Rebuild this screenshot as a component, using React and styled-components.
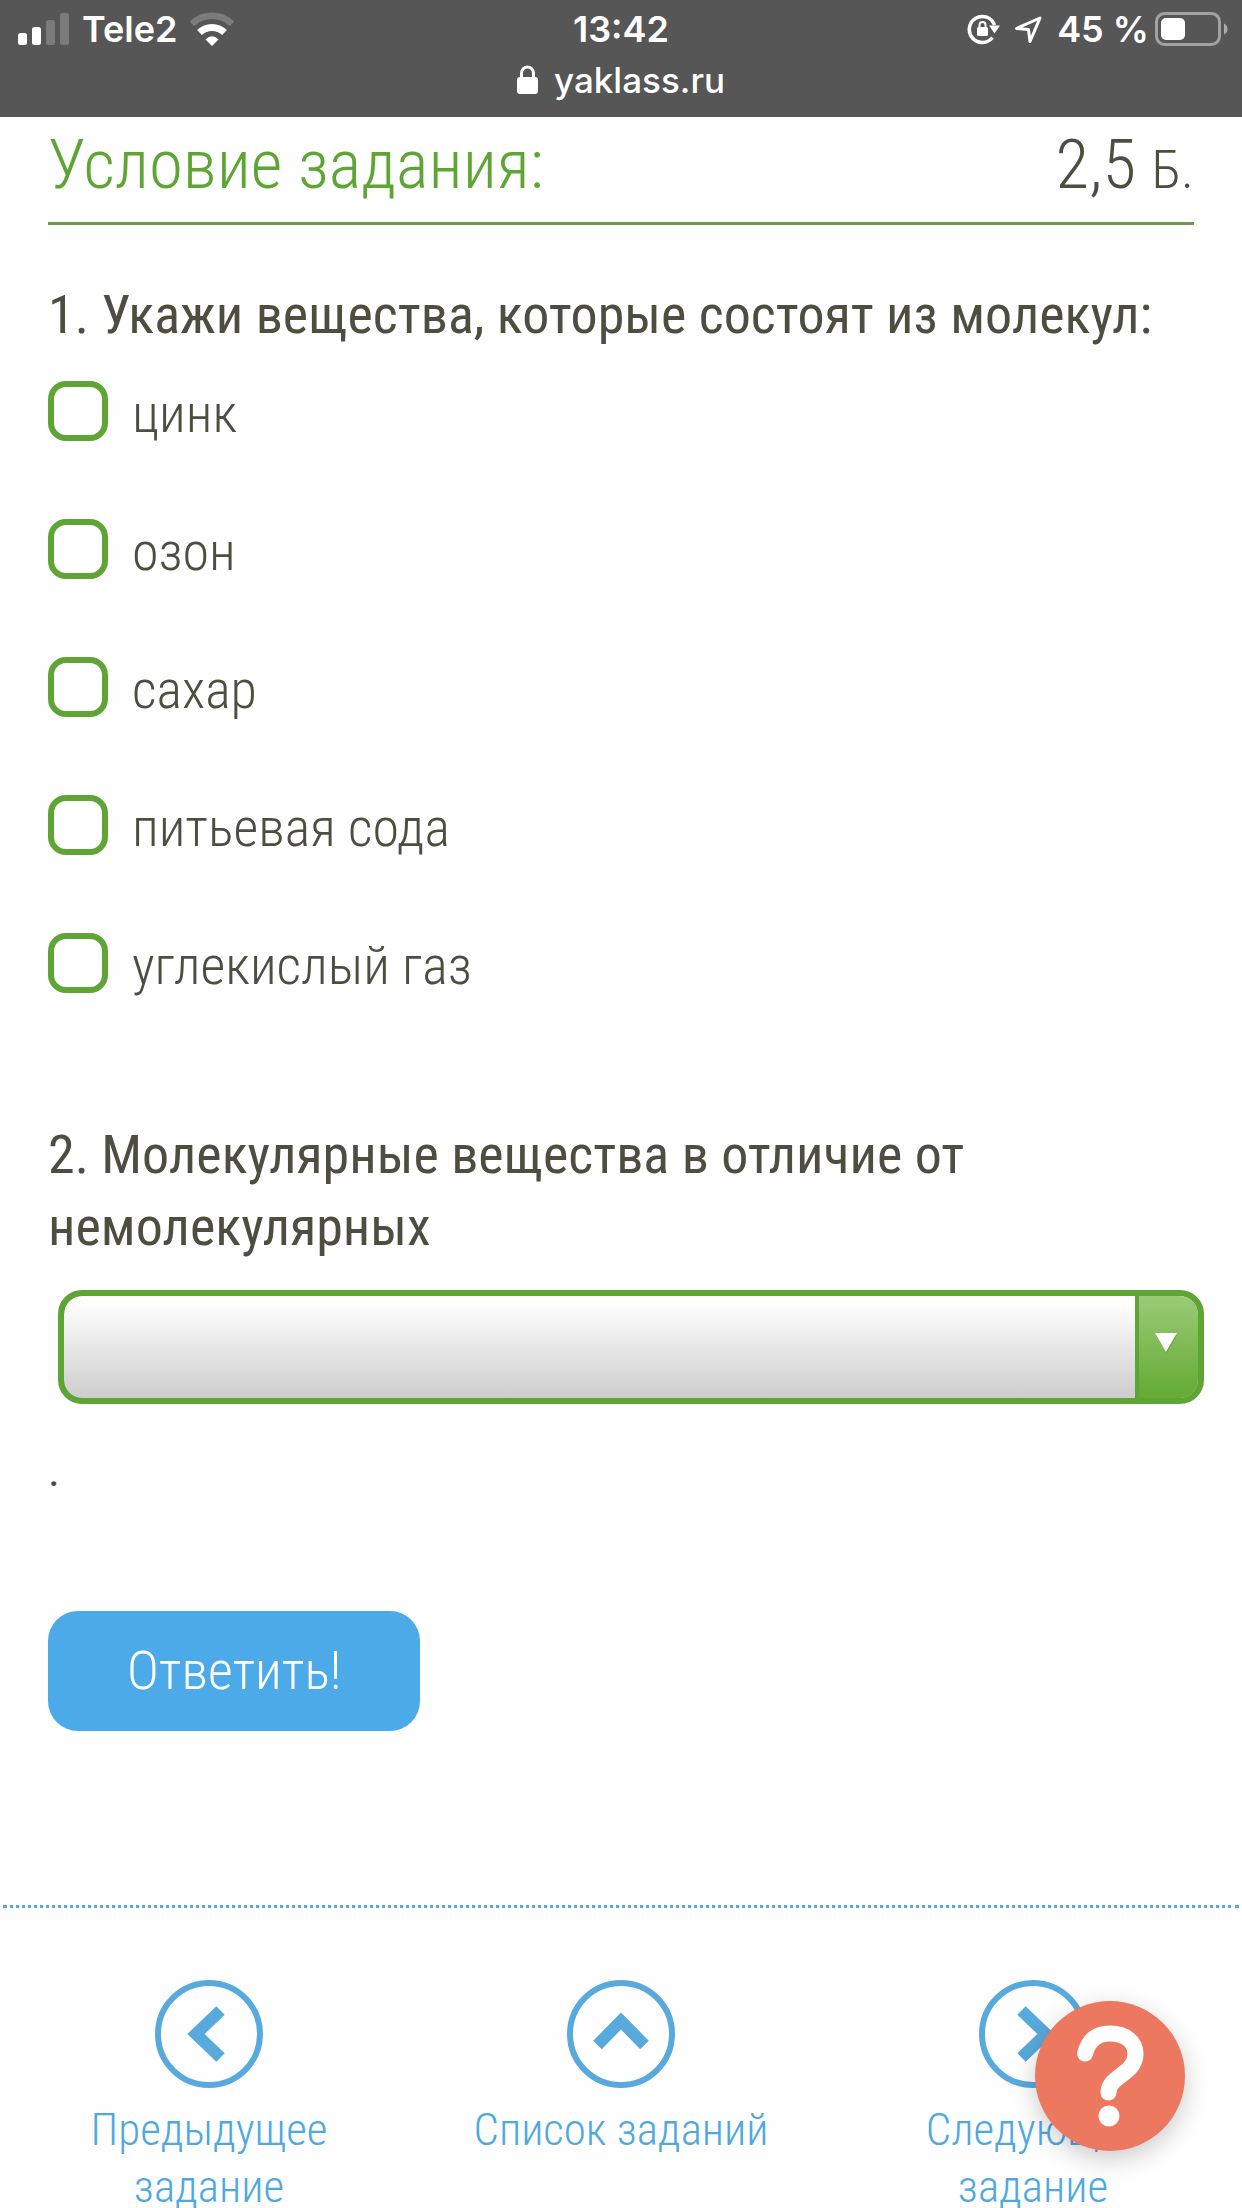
import React from "react";
import styled, { createGlobalStyle } from "styled-components";

const GREEN = "#5fa535";
const BLUE = "#58a9dc";
const INK = "#4e4e40";
const UI_FONT = `Inter, "Liberation Sans", sans-serif`;

const GlobalStyle = createGlobalStyle`
  *, *::before, *::after { box-sizing: border-box; }
  html { scrollbar-width: none; }
  body {
    margin: 0;
    background: #fefefe;
    color: ${INK};
    font-family: "Roboto Condensed", Roboto, "Liberation Sans", sans-serif;
    font-weight: 300;
    font-size: 54px;
  }
`;

const TopBar = styled.header`
  height: 117px;
  background: #565656;
  color: #fff;
  font-family: ${UI_FONT};
`;

const StatusRow = styled.div`
  display: grid;
  grid-template-columns: 1fr auto 1fr;
  align-items: center;
  height: 58px;
  padding: 0 14px;
  font-size: 36px;
  line-height: 40px;
  font-weight: 600;
`;

const StatusGroup = styled.div`
  display: flex;
  align-items: center;
  gap: ${(p) => p.$gap}px;
  justify-content: ${(p) => (p.$end ? "flex-end" : "flex-start")};
`;

const AddressRow = styled.div`
  display: flex;
  justify-content: center;
  align-items: center;
  gap: 16px;
  height: 44px;
  font-size: 35px;
  line-height: 44px;
  font-weight: 500;
`;

const Main = styled.main`
  padding: 0 48px;
`;

const TaskHeader = styled.div`
  display: flex;
  justify-content: space-between;
  align-items: baseline;
  height: 108px;
  padding-top: 7px;
  border-bottom: 3px solid #689f46;
  line-height: 82px;
`;

const Title = styled.h1`
  margin: 0;
  font-size: 69px;
  font-weight: 300;
  color: ${GREEN};
`;

const Points = styled.span`
  font-size: 69px;
  font-weight: 300;
`;

const Unit = styled.span`
  font-size: 54px;
`;

const Question = styled.p`
  display: block;
  margin: 0;
  padding-top: ${(p) => p.$top}px;
  font-size: 54px;
  line-height: 72px;
  font-weight: 400;
`;

const Options = styled.fieldset`
  display: flex;
  flex-direction: column;
  gap: 66px;
  margin: 0;
  padding: 27px 0 0;
  border: 0;
`;

const Option = styled.label`
  display: flex;
  align-items: center;
  gap: 24px;
  height: 72px;
  line-height: 72px;
`;

const Tick = styled.input`
  appearance: none;
  flex: none;
  width: 60px;
  height: 60px;
  margin: 0 0 6px;
  border: 6px solid ${GREEN};
  border-radius: 18px;
  background: #fff;
  &:checked { background: ${GREEN}; }
`;

const SelectBox = styled.div`
  display: grid;
  margin: 27px -10px 0 10px;
  height: 114px;
  border: 6px solid ${GREEN};
  border-radius: 24px;
  background: ${GREEN};
  overflow: hidden;
`;

const Select = styled.select`
  grid-area: 1 / 1;
  appearance: none;
  width: 100%;
  padding: 0 84px 0 24px;
  border: 0;
  border-radius: 18px;
  background: linear-gradient(#fff 5%, #cdcdcd);
  color: ${INK};
  font: inherit;
`;

const Arrow = styled.span`
  grid-area: 1 / 1;
  justify-self: end;
  display: flex;
  align-items: center;
  justify-content: center;
  width: 63px;
  padding: 0 6px 8px 0;
  border-left: 4px solid ${GREEN};
  border-radius: 0 18px 18px 0;
  background: linear-gradient(#9acb76, #64aa33);
  pointer-events: none;
`;

const Dot = styled.p`
  margin: 0;
  padding-top: 37px;
  font-size: 45px;
  font-weight: 400;
  line-height: 60px;
`;

const Submit = styled.button`
  display: block;
  margin: 110px 0 0;
  height: 120px;
  padding: 0 79px 2px;
  border: 0;
  border-radius: 30px;
  background: #4caae8;
  color: #fff;
  font: inherit;
`;

const Pager = styled.nav`
  display: grid;
  grid-template-columns: repeat(3, 1fr);
  margin: 174px 3px 0;
  padding-top: 72px;
  border-top: 3px dotted ${BLUE};
`;

const PagerLink = styled.a`
  display: flex;
  flex-direction: column;
  align-items: center;
  gap: 13px;
  padding: 0 ${(p) => (p.$wide ? 0 : 72)}px;
  text-align: center;
  text-decoration: none;
  color: #4fa9e0;
  font-size: 45px;
  line-height: 57px;
`;

const HelpButton = styled.button`
  position: fixed;
  right: 57px;
  bottom: 57px;
  width: 150px;
  height: 150px;
  padding: 0;
  border: 0;
  border-radius: 50%;
  background: #ec7860;
  box-shadow: 0 8px 24px rgba(0, 0, 0, 0.2);
`;

const Icon = styled.svg`
  display: block;
  flex: none;
`;

const OPTIONS = ["цинк", "озон", "сахар", "питьевая сода", "углекислый газ"];

const CircleArrow = ({ d }) => (
  <Icon width="108" height="108" viewBox="0 0 108 108" fill="none" stroke={BLUE} aria-hidden="true">
    <circle cx="54" cy="54" r="51" strokeWidth="6" />
    <path d={d} strokeWidth="12" />
  </Icon>
);

const Signal = () => (
  <Icon width="56" height="34" viewBox="0 0 56 34" fill="#fff" aria-hidden="true">
    <rect x="4" y="21" width="9" height="12" rx="2.5" />
    <rect x="18" y="15" width="9" height="18" rx="2.5" />
    <rect x="32" y="8" width="9" height="25" rx="2.5" opacity="0.22" />
    <rect x="46" y="1" width="9" height="32" rx="2.5" opacity="0.22" />
  </Icon>
);

const Wifi = () => (
  <Icon width="46" height="34" viewBox="0 0 46 34" fill="none" stroke="#fff" aria-hidden="true">
    <path d="M3 12a28.500 28.500 0 0 1 40 0" strokeWidth="6.5" opacity="0.22" />
    <path d="M10.500 20.500a18 18 0 0 1 25 0" strokeWidth="7" />
    <path d="M16.500 27.500q6.500-6.500 13 0L23 34z" fill="#fff" stroke="none" />
  </Icon>
);

const RotationLock = () => (
  <Icon width="33" height="32" viewBox="0 0 33 32" fill="none" stroke="#fff" aria-hidden="true">
    <path d="M25.500 24.500A13 13 0 1 1 27.500 12" strokeWidth="3.500" />
    <path d="M22 12.500h11l-5.500 8z" fill="#fff" stroke="none" />
    <rect x="10" y="14" width="11" height="9" rx="1.500" fill="#fff" stroke="none" />
    <path d="M12.500 15v-3a3 3 0 0 1 6 0v3" strokeWidth="2" />
  </Icon>
);

const Location = () => (
  <Icon width="29" height="29" viewBox="0 0 29 29" fill="none" stroke="#fff" aria-hidden="true">
    <path d="M2.500 13.500L26 3 16 26.500 14.500 14.500z" strokeWidth="3" strokeLinejoin="round" />
  </Icon>
);

const Battery = () => (
  <Icon width="73" height="34" viewBox="0 0 73 34" fill="none" aria-hidden="true">
    <rect x="1.500" y="1.500" width="63" height="31" rx="8" stroke="#fff" strokeOpacity="0.45" strokeWidth="3" />
    <rect x="6" y="6" width="24" height="22" rx="5" fill="#fff" />
    <path d="M69 11.500q3.500 1.500 3.500 5.500t-3.500 5.500z" fill="#fff" fillOpacity="0.5" />
  </Icon>
);

const Padlock = () => (
  <Icon width="21" height="30" viewBox="0 0 21 30" fill="none" aria-hidden="true">
    <rect x="0" y="12" width="21" height="17" rx="3" fill="#fff" />
    <path d="M4.500 14V8a6 6 0 0 1 12 0v6" stroke="#fff" strokeWidth="3" />
  </Icon>
);

export default function App() {
  return (
    <>
      <GlobalStyle />
      <TopBar>
        <StatusRow>
          <StatusGroup $gap={12}>
            <Signal />
            <span>Tele2</span>
            <Wifi />
          </StatusGroup>
          <span>13:42</span>
          <StatusGroup $gap={14} $end>
            <RotationLock />
            <Location />
            <StatusGroup $gap={6}>
              <span>45 %</span>
              <Battery />
            </StatusGroup>
          </StatusGroup>
        </StatusRow>
        <AddressRow>
          <Padlock />
          <span>yaklass.ru</span>
        </AddressRow>
      </TopBar>

      <Main>
        <TaskHeader>
          <Title>Условие задания:</Title>
          <Points>
            2,5 <Unit>Б.</Unit>
          </Points>
        </TaskHeader>

        <Question id="q1" $top={54}>1. Укажи вещества, которые состоят из молекул:</Question>
        <Options aria-labelledby="q1">
          {OPTIONS.map((name) => (
            <Option key={name}>
              <Tick type="checkbox" name="substance" value={name} />
              <span>{name}</span>
            </Option>
          ))}
        </Options>

        <Question as="label" htmlFor="difference" $top={117}>
          2. Молекулярные вещества в отличие от немолекулярных
        </Question>
        <SelectBox>
          <Select id="difference" defaultValue="">
            <option value=""></option>
          </Select>
          <Arrow>
            <Icon width="22" height="20" viewBox="0 0 22 20" aria-hidden="true">
              <path d="M1 2h21L11.500 20z" fill="#3f7a1c" opacity="0.5" />
              <path d="M0 0h22L11 19z" fill="#fff" />
            </Icon>
          </Arrow>
        </SelectBox>
        <Dot>.</Dot>

        <Submit type="button">Ответить!</Submit>
      </Main>

      <Pager>
        <PagerLink href="#previous">
          <CircleArrow d="M65.500 30.500L41 54l24.500 23.500" />
          Предыдущее задание
        </PagerLink>
        <PagerLink href="#list" $wide>
          <CircleArrow d="M30.500 65L54 41l23.500 24" />
          Список заданий
        </PagerLink>
        <PagerLink href="#next">
          <CircleArrow d="M42.500 30.500L67 54 42.500 77.500" />
          Следующее задание
        </PagerLink>
      </Pager>

      <HelpButton type="button" aria-label="Помощь">
        <Icon width="150" height="150" viewBox="0 0 150 150" fill="none" aria-hidden="true">
          <path
            d="M50 52.500C54 38 63 32.500 75 32.500c15 0 25.500 8 25.500 20.500 0 20-27 22-27 38.500"
            stroke="#fff"
            strokeWidth="16"
            strokeLinecap="round"
          />
          <circle cx="74" cy="115" r="10.500" fill="#fff" />
        </Icon>
      </HelpButton>
    </>
  );
}
